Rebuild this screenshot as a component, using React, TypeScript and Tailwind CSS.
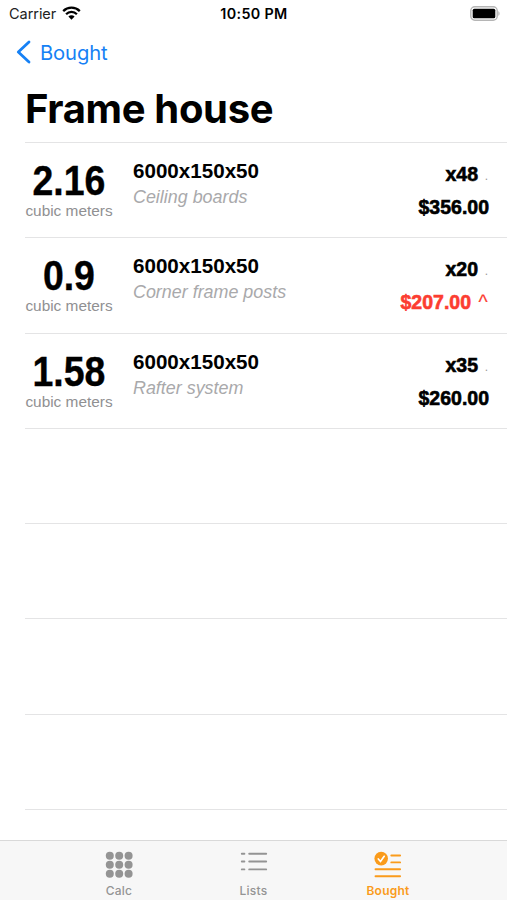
import clsx from 'clsx'

interface Board {
  volume: string
  size: string
  note: string
  count: string
  price: string
  raised?: boolean
}

const boards: Board[] = [
  { volume: '2.16', size: '6000x150x50', note: 'Ceiling boards', count: 'x48', price: '$356.00' },
  { volume: '0.9', size: '6000x150x50', note: 'Corner frame posts', count: 'x20', price: '$207.00', raised: true },
  { volume: '1.58', size: '6000x150x50', note: 'Rafter system', count: 'x35', price: '$260.00' },
]

const emptyRows = [0, 1, 2, 3]

function StatusBar() {
  return (
    <div className="grid h-7 grid-cols-3 items-center pl-[8px] pr-[7px] text-[14.5px] text-[#222]">
      <div className="flex items-center gap-[6px]">
        <span className="pl-px tracking-[-0.05px]">Carrier</span>
        <svg className="mb-[2px]" width="19" height="14" viewBox="0 0 19 14" fill="none" stroke="#000" strokeWidth="2.3">
          <path d="M1.2 5.1a11.8 11.8 0 0 1 16.6 0" />
          <path d="M4.1 8.2a7.6 7.6 0 0 1 10.8 0" />
          <path d="M9.5 13.7 6.4 10.5a4.4 4.4 0 0 1 6.2 0Z" fill="#000" stroke="none" />
        </svg>
      </div>
      <span className="whitespace-nowrap text-center text-[14.3px] font-semibold tracking-[0.35px] text-black">10:50 PM</span>
      <svg className="mb-px justify-self-end" width="31" height="15" viewBox="0 0 31 15">
        <rect x="1.8" y="0.8" width="26.4" height="13.4" rx="4" fill="#fff" stroke="#b5b5b5" strokeWidth="1.4" />
        <rect x="3.7" y="2.7" width="22.6" height="9.6" rx="1.6" fill="#000" />
        <path d="M29.3 5.2c1.7.6 1.7 4 0 4.6Z" fill="#b5b5b5" />
      </svg>
    </div>
  )
}

function BoardRow({ board }: { board: Board }) {
  return (
    <div className="flex h-[95.3px] border-t border-[#e4e4e5] pr-[18px] font-['Liberation_Sans',Arial,sans-serif]">
      <div className="flex w-[88px] flex-col items-center whitespace-nowrap pt-[19px]">
        <span className="scale-x-[0.87] text-[43px] font-bold leading-[37px] [-webkit-text-stroke:0.4px_currentColor]">{board.volume}</span>
        <span className="mt-[3px] text-[15.4px] leading-[17px] text-[#909092]">cubic meters</span>
      </div>
      <div className="ml-[20px] flex flex-1 flex-col whitespace-nowrap pt-[16px]">
        <span className="text-[20.6px] font-bold leading-6">{board.size}</span>
        <span className="mt-[2px] text-[17.9px] italic leading-6 text-[#a9a9ab]">{board.note}</span>
      </div>
      <div className="flex flex-col items-end pt-[19px] text-[19.5px] font-bold leading-6 [-webkit-text-stroke:0.6px_currentColor]">
        <div className="flex h-6">
          <span>{board.count}</span>
          <span className="w-[11px] pr-px pt-[2px] text-right text-[12px] font-normal text-[#999] [-webkit-text-stroke:0px]">.</span>
        </div>
        <div className={clsx('mt-[9px] flex', board.raised && 'text-[#fc3d31]')}>
          <span>{board.price}</span>
          {board.raised && (
            <span className="ml-[6px] w-[12px] text-center font-normal [-webkit-text-stroke:0.2px_currentColor]">^</span>
          )}
        </div>
      </div>
    </div>
  )
}

function GridIcon() {
  return (
    <svg width="28" height="27" viewBox="0 0 28 27" fill="currentColor">
      {[4.7, 13.7, 22.7].map((y) =>
        [4.8, 14.2, 23.6].map((x) => <circle key={`${x}-${y}`} cx={x} cy={y} r="4" />)
      )}
    </svg>
  )
}

function ListIcon() {
  return (
    <svg width="28" height="27" viewBox="0 0 28 27" fill="none" stroke="currentColor" strokeWidth="1.9" strokeLinecap="round">
      <path d="M1.8 2.7h2.6M9.2 2.7h17M1.8 10.5h2.6M9.2 10.5h17M1.8 18.4h2.6M9.2 18.4h17" />
    </svg>
  )
}

function CheckListIcon() {
  return (
    <svg width="28" height="27" viewBox="0 0 28 27" fill="none" stroke="currentColor" strokeWidth="1.9" strokeLinecap="round">
      <circle cx="7.2" cy="7.6" r="6.8" fill="currentColor" stroke="none" />
      <path d="m4.3 8 2.2 2.5 3.7-5.2" stroke="#fff" strokeWidth="1.7" />
      <path d="M17.3 4.5h8.8M17.3 11.4h8.8M1.5 18.2h24.6M1.5 25.2h24.6" />
    </svg>
  )
}

const tabs = [
  { label: 'Calc', icon: GridIcon },
  { label: 'Lists', icon: ListIcon },
  { label: 'Bought', icon: CheckListIcon, active: true },
]

export default function App() {
  return (
    <div className="flex h-[900px] w-[507px] flex-col overflow-hidden bg-white font-['Inter',sans-serif] text-black">
      <StatusBar />
      <div className="flex h-12 items-center gap-[9px] pl-4 text-[20.2px] text-[#1681f5]">
        <svg width="15" height="24" viewBox="0 0 15 24" fill="none" stroke="currentColor" strokeWidth="2.8" strokeLinecap="round" strokeLinejoin="round">
          <path d="M13 2 2.3 12 13 22" />
        </svg>
        <span className="pt-[2px] tracking-[-0.1px]">Bought</span>
      </div>
      <h1 className="h-[66px] pl-[25px] pt-[9px] text-[40px] font-bold leading-[48px] tracking-[-0.35px]">Frame house</h1>

      <div className="h-[698px] overflow-hidden pl-[25px]">
        {boards.map((board) => (
          <BoardRow key={board.note} board={board} />
        ))}
        {emptyRows.map((row) => (
          <div key={row} className="h-[95.3px] border-t border-[#e4e4e5]" />
        ))}
        <div className="border-t border-[#e4e4e5]" />
      </div>

      <div className="flex h-[60px] shrink-0 justify-center border-t border-[#d9d9d9] bg-[#f7f7f7]">
        {tabs.map(({ label, icon: Icon, active }) => (
          <div
            key={label}
            className={clsx(
              'flex w-[134.5px] flex-col items-center pt-[10px]',
              active ? 'text-[#fa9b1b]' : 'text-[#949494]'
            )}
          >
            <Icon />
            <span className={clsx('mt-[5px] text-[12px] leading-4 tracking-[0.25px]', active ? 'font-semibold' : 'font-medium')}>
              {label}
            </span>
          </div>
        ))}
      </div>
    </div>
  )
}
